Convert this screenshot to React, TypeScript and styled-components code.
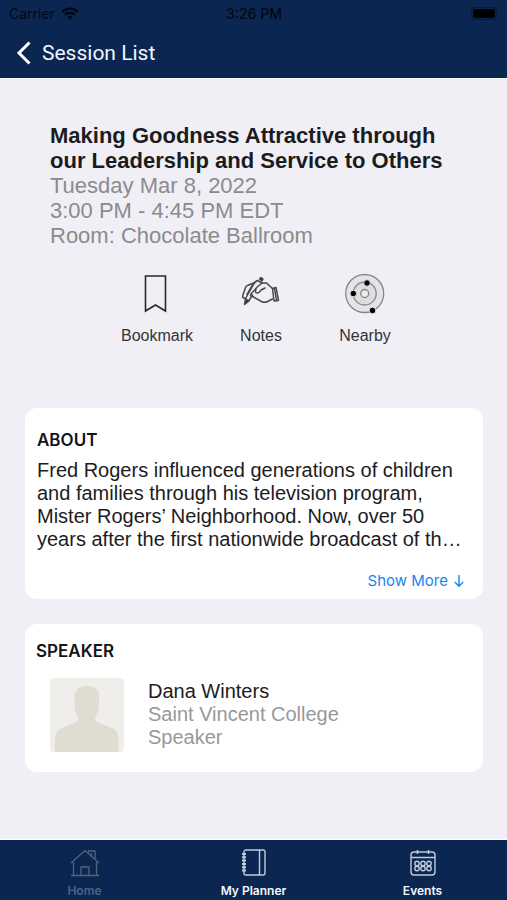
import React from "react";
import styled, { createGlobalStyle } from "styled-components";

const GlobalStyle = createGlobalStyle`
  *, *::before, *::after { box-sizing: border-box; }
  body { margin: 0; background: #f0eff5; }
  button { border: 0; padding: 0; background: none; font: inherit; color: inherit; cursor: pointer; }
  h1, h2, p { margin: 0; }
  svg { display: block; flex: none; }
`;

const navy = "#0c2652";
const system = `Inter, "Liberation Sans", sans-serif`;

const Screen = styled.div`
  display: flex;
  flex-direction: column;
  min-height: 100vh;
  background: #f0eff5;
  color: #1c1c1e;
  font-family: "Liberation Sans", Arial, sans-serif;
`;

const Header = styled.header`
  background: ${navy};
  border-bottom: 1px solid #ffffff;
`;

const StatusBar = styled.div`
  display: grid;
  grid-template-columns: 1fr auto 1fr;
  align-items: center;
  height: 27px;
  padding: 0 8px 0 9px;
  color: #020813;
  font: 400 14px/27px ${system};
`;

const Carrier = styled.div`
  display: flex;
  align-items: center;
  gap: 6px;
`;

const Clock = styled.div`
  font-weight: 500;
`;

const Battery = styled.div`
  justify-self: end;
`;

const BackButton = styled.button`
  display: flex;
  align-items: center;
  gap: 10px;
  height: 51px;
  margin-left: 16px;
  color: #f2f6fc;
  font-family: Roboto, sans-serif;
  font-size: 21px;
`;

const Main = styled.main`
  flex: 1;
  padding: 44px 24px 24px 25px;
`;

const Session = styled.section`
  padding: 0 25px;
  font-size: 22px;
  line-height: 25px;
  color: #8b8b8e;
`;

const SessionTitle = styled.h1`
  font-size: 22px;
  line-height: 25px;
  font-weight: 700;
  color: #1c1c1e;
`;

const Actions = styled.div`
  display: grid;
  grid-template-columns: repeat(3, 104px);
  justify-content: center;
  margin: 26px 0 60px 14px;
`;

const Action = styled.button`
  display: flex;
  flex-direction: column;
  align-items: center;
  gap: 10px;
  font-size: 16px;
  line-height: 24px;
  color: #343437;
`;

const Card = styled.section`
  display: flex;
  flex-direction: column;
  margin-bottom: 25px;
  padding: 20px 12px 8px;
  border-radius: 12px;
  background: #ffffff;
`;

const SpeakerCard = styled(Card)`
  padding: 15px 11px 20px;
`;

const CardTitle = styled.h2`
  font: 600 17px/24px ${system};
  color: #141416;
`;

const About = styled.p`
  margin-top: 7px;
  font-size: 20px;
  line-height: 23px;
  color: #1c1c1e;
`;

const ShowMore = styled.button`
  display: flex;
  align-items: center;
  align-self: flex-end;
  gap: 6px;
  margin: 20px 7px 0 0;
  color: #1a84f0;
  font: 400 15px/20px ${system};
`;

const Speaker = styled.div`
  display: flex;
  gap: 24px;
  padding: 15px 14px 0;
`;

const SpeakerInfo = styled.div`
  padding-top: 2px;
  font-size: 20px;
  line-height: 23px;
  color: #98989b;
`;

const SpeakerName = styled.p`
  color: #1c1c1e;
`;

const TabBar = styled.nav`
  display: grid;
  grid-template-columns: repeat(3, 1fr);
  height: 61px;
  border-top: 1px solid #ffffff;
  background: ${navy};
`;

const Tab = styled.button<{ $current?: boolean }>`
  display: flex;
  flex-direction: column;
  align-items: center;
  gap: 7px;
  padding-top: 9px;
  color: ${(p) => (p.$current ? "#53637f" : "#f4f7fb")};
  font: 600 12px/14px ${system};
`;

const WifiIcon = () => (
  <svg width="18" height="13" viewBox="0 0 18 13" aria-hidden="true">
    <path d="M1.2 4.8a11.2 11.2 0 0 1 15.6 0M4 7.8a7.2 7.2 0 0 1 10 0" fill="none" stroke="currentColor" strokeWidth="2.4" />
    <path d="M9 12.8 6.2 10a4 4 0 0 1 5.6 0z" fill="currentColor" />
  </svg>
);

const BatteryIcon = () => (
  <svg width="28" height="13" viewBox="0 0 28 13" aria-hidden="true">
    <rect x="0.5" y="0.5" width="25" height="12" rx="3.5" fill="none" stroke="#081a3a" />
    <rect x="2" y="2" width="22" height="9" rx="2" fill="#000000" />
    <path d="M26.5 4.5q1.3 2 0 4z" fill="#081a3a" />
  </svg>
);

const BackIcon = () => (
  <svg width="16" height="24" viewBox="0 0 16 24" fill="none" aria-hidden="true">
    <path d="M13.500 1.500 3 12l10.500 10.500" stroke="#ffffff" strokeWidth="3" />
  </svg>
);

const BookmarkIcon = () => (
  <svg width="40" height="40" viewBox="0 0 40 40" fill="none" aria-hidden="true">
    <path d="M8.500 2h20v35l-10-6-10 6z" stroke="#28282a" strokeWidth="1.600" />
  </svg>
);

const NotesIcon = () => (
  <svg width="40" height="40" viewBox="0 0 40 40" fill="none" stroke="#48484a" strokeWidth="1.500" strokeLinejoin="round" strokeLinecap="round" aria-hidden="true">
    <path d="m18.500 5 1.500-1.500L22 5l-1 2z" fill="#28282a" />
    <path d="m4.500 25-1 5.500 4.500-3.500z" fill="#28282a" />
    <path d="M4.500 24.500c-2-.3-3.300-1-2.700-3l2.700-8c.5-1.300 1.200-2 2.500-2.300l7.500-3" />
    <path d="M4.500 24.500 14 8l2.500-1.500L21 9M8 26.500l3.500-5.500M6 20.500l5.500-9.500" />
    <path d="m15 14.500-5 5.500c-1 1.500 0 2.500 1.500 2.500l9 5c2 1 4 1 6 0l5-2.500" />
    <path d="M21 9h4.500l6.500 6" />
    <path d="m15.500 13.500 5-4M15 14.500c-1 3-.5 4.500 1 4.500 2 0 3-1 4-3l4-2" />
    <path d="m31.500 14.500 3.500-1 2.500 13-4.500.5z" />
    <path d="m33.500 14 2 12.500" />
  </svg>
);

const NearbyIcon = () => (
  <svg width="40" height="40" viewBox="0 0 40 40" fill="none" aria-hidden="true">
    <circle cx="19.700" cy="19.500" r="19" fill="#e4e4e8" stroke="#858588" strokeWidth="1.300" />
    <circle cx="19.700" cy="19.500" r="11.500" fill="#dededf" stroke="#858588" strokeWidth="1.300" />
    <circle cx="19.700" cy="19.500" r="4" fill="#ececef" stroke="#858588" strokeWidth="1.300" />
    <g fill="#000000" stroke="#e4e4e8">
      <circle cx="22" cy="9" r="3.300" />
      <circle cx="8.300" cy="19.500" r="3.300" />
      <circle cx="27.500" cy="36.500" r="3.300" />
    </g>
  </svg>
);

const DownArrow = () => (
  <svg width="10" height="14" viewBox="0 0 10 14" fill="none" aria-hidden="true">
    <path d="M5 1v11M.8 8 5 12.200 9.200 8" stroke="currentColor" strokeWidth="1.400" />
  </svg>
);

const Avatar = () => (
  <svg width="74" height="74" viewBox="0 0 74 74" role="img" aria-label="Dana Winters">
    <rect width="74" height="74" rx="4" fill="#efeeea" />
    <path d="M5 74V62c0-6 2-10 7-12l12-5c4-1.500 5-3 4-6-2-3-3-6-3.500-11V18C25 12 29 8 37 8s12 4 12 10v10c-.5 5-1.500 8-3.500 11-1 3 0 4.500 4 6l12 5c5 2 7 6 7 12v12z" fill="#dfddd2" />
  </svg>
);

const HomeIcon = () => (
  <svg width="30" height="28" viewBox="0 0 30 28" fill="none" stroke="currentColor" strokeWidth="1.300" aria-hidden="true">
    <path d="M1 14 15 1.500l14 12.500M1 26.500h28M3.500 13v13.500M26.500 13v13.500M11 26.500V18h8v8.500M18.500 4V2H25v8M21.500 4v3" />
  </svg>
);

const PlannerIcon = () => (
  <svg width="26" height="28" viewBox="0 0 26 28" fill="none" stroke="#c1cbdc" strokeWidth="1.400" aria-hidden="true">
    <rect x="3" y="1" width="21" height="25" rx="2" />
    <path d="M18.500 1v25" />
    <path d="M1 5h4M1 8.300h4M1 11.600h4M1 14.900h4M1 18.200h4M1 21.500h4" strokeWidth="2" />
  </svg>
);

const EventsIcon = () => (
  <svg width="26" height="28" viewBox="0 0 26 28" fill="none" stroke="#c1cbdc" strokeWidth="1.400" aria-hidden="true">
    <rect x="1" y="3" width="24" height="23" rx="3" />
    <path d="M1 8.500h24M7.500 1v4M18.500 1v4" />
    {[7, 13, 19].map((x) =>
      [14.500, 19.500].map((y) => <circle key={`${x}-${y}`} cx={x} cy={y} r="2.200" />)
    )}
  </svg>
);

export default function App() {
  return (
    <Screen>
      <GlobalStyle />
      <Header>
        <StatusBar>
          <Carrier>Carrier <WifiIcon /></Carrier>
          <Clock>3:26 PM</Clock>
          <Battery><BatteryIcon /></Battery>
        </StatusBar>
        <BackButton type="button"><BackIcon />Session List</BackButton>
      </Header>
      <Main>
        <Session>
          <SessionTitle>Making Goodness Attractive through our Leadership and Service to Others</SessionTitle>
          <p>Tuesday Mar 8, 2022</p>
          <p>3:00 PM - 4:45 PM EDT</p>
          <p>Room: Chocolate Ballroom</p>
        </Session>
        <Actions>
          <Action type="button"><BookmarkIcon />Bookmark</Action>
          <Action type="button"><NotesIcon />Notes</Action>
          <Action type="button"><NearbyIcon />Nearby</Action>
        </Actions>
        <Card>
          <CardTitle>ABOUT</CardTitle>
          <About>
            Fred Rogers influenced generations of children and families through his television program,
            Mister Rogers’ Neighborhood. Now, over 50 years after the first nationwide broadcast of th…
          </About>
          <ShowMore type="button">Show More <DownArrow /></ShowMore>
        </Card>
        <SpeakerCard>
          <CardTitle>SPEAKER</CardTitle>
          <Speaker>
            <Avatar />
            <SpeakerInfo>
              <SpeakerName>Dana Winters</SpeakerName>
              <p>Saint Vincent College</p>
              <p>Speaker</p>
            </SpeakerInfo>
          </Speaker>
        </SpeakerCard>
      </Main>
      <TabBar>
        <Tab type="button" $current aria-current="page"><HomeIcon />Home</Tab>
        <Tab type="button"><PlannerIcon />My Planner</Tab>
        <Tab type="button"><EventsIcon />Events</Tab>
      </TabBar>
    </Screen>
  );
}
